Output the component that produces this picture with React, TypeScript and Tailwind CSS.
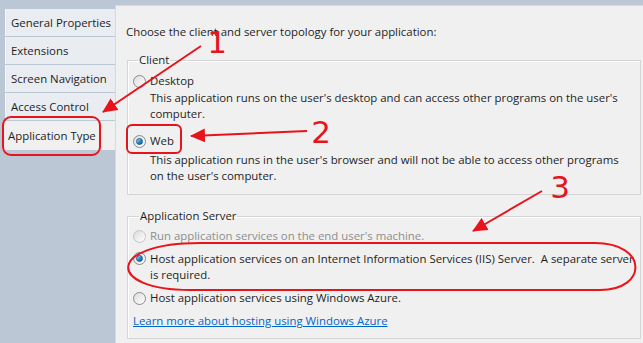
const tabs = ["General Properties", "Extensions", "Screen Navigation", "Access Control"];

function Radio({ checked = false, disabled = false }: { checked?: boolean; disabled?: boolean }) {
  return <span className={`mt-[1px] flex h-[13px] w-[13px] shrink-0 items-center justify-center rounded-full border bg-gradient-to-br from-[#dcdcdc] to-[#ffffff] ${disabled ? "border-[#c4c4c4]" : "border-[#8a8a8a]"}`}>
    {checked && <span className="h-[7px] w-[7px] rounded-full border border-[#1c5b8c] bg-gradient-to-br from-[#a9e0ff] via-[#2b8fd6] to-[#0d4f85]" />}
  </span>;
}

function Option({ label, checked, disabled, children }: { label: string; checked?: boolean; disabled?: boolean; children?: React.ReactNode }) {
  return <div>
    <div className={`flex items-center gap-[4px] ${disabled ? "text-[#8e8e8e]" : ""}`}>
      <Radio checked={checked} disabled={disabled} />
      <span>{label}</span>
    </div>
    {children && <div className="pl-[17px]">{children}</div>}
  </div>;
}

function Annotations() {
  return <svg className="pointer-events-none absolute inset-0" width="643" height="343" viewBox="0 0 643 343">
    <defs>
      <marker id="head" markerUnits="userSpaceOnUse" markerWidth="16" markerHeight="14" refX="14" refY="7" orient="auto">
        <path d="M0 0 L15 7 L0 14 Z" fill="#e8141c" />
      </marker>
    </defs>
    <g stroke="#e8141c" strokeWidth="2" fill="none">
      <line x1="201" y1="46" x2="103" y2="112" markerEnd="url(#head)" />
      <line x1="307" y1="131" x2="191" y2="136" markerEnd="url(#head)" />
      <line x1="542" y1="191" x2="473" y2="231" markerEnd="url(#head)" />
      <rect x="3" y="117" width="97" height="38" rx="8" />
      <rect x="127" y="125" width="54" height="28" rx="5" />
      <path d="M200 243 L595 243 C648 243 648 290 600 290 L190 290 C106 290 106 243 200 243 Z" />
    </g>
    <g fill="#e8141c" fontFamily="'DejaVu Sans', sans-serif" fontSize="31" textAnchor="middle">
      <text x="217" y="53">1</text>
      <text x="321" y="143">2</text>
      <text x="560" y="198">3</text>
    </g>
  </svg>;
}

export default function App() {
  return <div className="relative flex h-[343px] w-[643px] overflow-hidden whitespace-nowrap bg-[#bcc7d5] pt-[5px] font-['Open_Sans',sans-serif] text-[11.4px] leading-[16px] text-[#1e1e1e]">
    <div className="flex w-[115px] shrink-0 flex-col gap-px pt-[4px]">
      {tabs.map(t => <div key={t} className="ml-[5px] flex h-[27px] items-center border-l border-[#f6f7f9] bg-[#e9ecf0] pl-[5px]">{t}</div>)}
      <div className="ml-[2px] flex h-[29px] items-center bg-[#f0f0f0] pl-[6px]">Application Type</div>
    </div>
    <div className="flex-1 border-l border-t border-[#d3dae3] bg-[#f0f0f0] pl-[10px] pt-[18px] pr-[2px]">
      <div>Choose the client and server topology for your application:</div>
      <fieldset className="ml-[1px] mt-[12px] border border-[#d5d5d5] pb-[10px] pl-[5px] shadow-[inset_1px_1px_0_#fff]">
        <legend className="ml-[5px] px-[1px]">Client</legend>
        <div className="pt-[5px]">
          <Option label="Desktop">
            <div className="pt-[1px]">This application runs on the user's desktop and can access other programs on the user's<br />computer.</div>
          </Option>
          <div className="mt-[11px]">
            <Option label="Web" checked>
              <div className="pt-[3px]">This application runs in the user's browser and will not be able to access other programs<br />on the user's computer.</div>
            </Option>
          </div>
        </div>
      </fieldset>
      <fieldset className="ml-[1px] mt-[13px] border border-[#d5d5d5] pb-[9px] pl-[5px] shadow-[inset_1px_1px_0_#fff]">
        <legend className="ml-[6px] px-[1px]">Application Server</legend>
        <div className="flex flex-col gap-[7px] pt-[4px]">
          <Option label="Run application services on the end user's machine." disabled />
          <div className="flex gap-[4px]">
            <Radio checked />
            <span>Host application services on an Internet Information Services (IIS) Server.&nbsp; A separate server<br />is required.</span>
          </div>
          <Option label="Host application services using Windows Azure." />
          <a href="#" className="self-start text-[#0066cc] underline">Learn more about hosting using Windows Azure</a>
        </div>
      </fieldset>
    </div>
    <Annotations />
  </div>;
}
